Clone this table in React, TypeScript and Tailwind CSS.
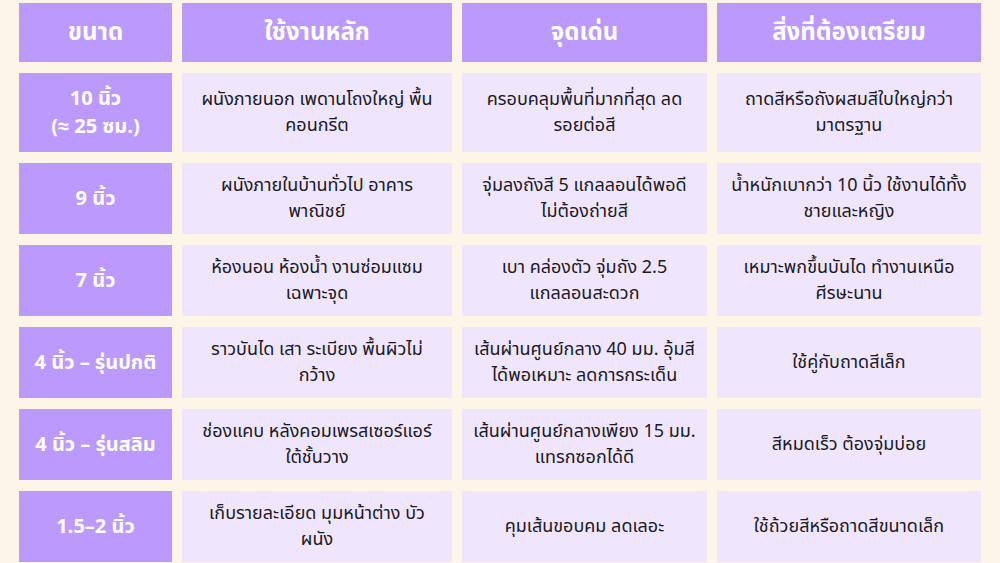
const headers = ["ขนาด", "ใช้งานหลัก", "จุดเด่น", "สิ่งที่ต้องเตรียม"];

// each cell is a list of lines, broken as in the design
const rows: { size: string[]; use: string[]; highlight: string[]; prep: string[] }[] = [
    {
        size: ["10 นิ้ว", "(≈ 25 ซม.)"],
        use: ["ผนังภายนอก เพดานโถงใหญ่ พื้น", "คอนกรีต"],
        highlight: ["ครอบคลุมพื้นที่มากที่สุด ลด", "รอยต่อสี"],
        prep: ["ถาดสีหรือถังผสมสีใบใหญ่กว่า", "มาตรฐาน"],
    },
    {
        size: ["9 นิ้ว"],
        use: ["ผนังภายในบ้านทั่วไป อาคาร", "พาณิชย์"],
        highlight: ["จุ่มลงถังสี 5 แกลลอนได้พอดี", "ไม่ต้องถ่ายสี"],
        prep: ["น้ำหนักเบากว่า 10 นิ้ว ใช้งานได้ทั้ง", "ชายและหญิง"],
    },
    {
        size: ["7 นิ้ว"],
        use: ["ห้องนอน ห้องน้ำ งานซ่อมแซม", "เฉพาะจุด"],
        highlight: ["เบา คล่องตัว จุ่มถัง 2.5", "แกลลอนสะดวก"],
        prep: ["เหมาะพกขึ้นบันได ทำงานเหนือ", "ศีรษะนาน"],
    },
    {
        size: ["4 นิ้ว – รุ่นปกติ"],
        use: ["ราวบันได เสา ระเบียง พื้นผิวไม่", "กว้าง"],
        highlight: ["เส้นผ่านศูนย์กลาง 40 มม. อุ้มสี", "ได้พอเหมาะ ลดการกระเด็น"],
        prep: ["ใช้คู่กับถาดสีเล็ก"],
    },
    {
        size: ["4 นิ้ว – รุ่นสลิม"],
        use: ["ช่องแคบ หลังคอมเพรสเซอร์แอร์", "ใต้ชั้นวาง"],
        highlight: ["เส้นผ่านศูนย์กลางเพียง 15 มม.", "แทรกซอกได้ดี"],
        prep: ["สีหมดเร็ว ต้องจุ่มบ่อย"],
    },
    {
        size: ["1.5–2 นิ้ว"],
        use: ["เก็บรายละเอียด มุมหน้าต่าง บัว", "ผนัง"],
        highlight: ["คุมเส้นขอบคม ลดเลอะ"],
        prep: ["ใช้ถ้วยสีหรือถาดสีขนาดเล็ก"],
    },
];

export default function App() {
    return (
        <div
            className="h-[563px] w-[1000px] overflow-hidden bg-[#fdf6e8] px-[19px] pt-[3px]"
            style={{ fontFamily: '"Noto Sans Thai", "Noto Sans", sans-serif' }}
        >
            <div className="grid grid-cols-[153px_270px_245px_264px] grid-rows-[59px_79px_71px_71px_71px_71px_71px] gap-x-[10px] gap-y-[11px]">
                {headers.map((h) => (
                    <div
                        key={h}
                        className="flex items-center justify-center bg-[#bc9afd] text-[24px] font-bold text-white"
                    >
                        {h}
                    </div>
                ))}
                {rows.map((r) => (
                    <Row key={r.use[0]} {...r} />
                ))}
            </div>
        </div>
    );
}

function Row({
    size,
    use,
    highlight,
    prep,
}: {
    size: string[];
    use: string[];
    highlight: string[];
    prep: string[];
}) {
    return (
        <>
            <div className="flex flex-col items-center justify-center whitespace-nowrap bg-[#bc9afd] text-center text-[20px] font-bold leading-[28px] text-white">
                {size.map((s) => (
                    <span key={s}>{s}</span>
                ))}
            </div>
            <BodyCell lines={use} />
            <BodyCell lines={highlight} />
            <BodyCell lines={prep} />
        </>
    );
}

function BodyCell({ lines }: { lines: string[] }) {
    return (
        <div className="flex flex-col items-center justify-center whitespace-nowrap bg-[#efe6fd] text-center text-[18px] leading-[26px] text-[#1a1a1f]">
            {lines.map((l) => (
                <span key={l}>{l}</span>
            ))}
        </div>
    );
}
